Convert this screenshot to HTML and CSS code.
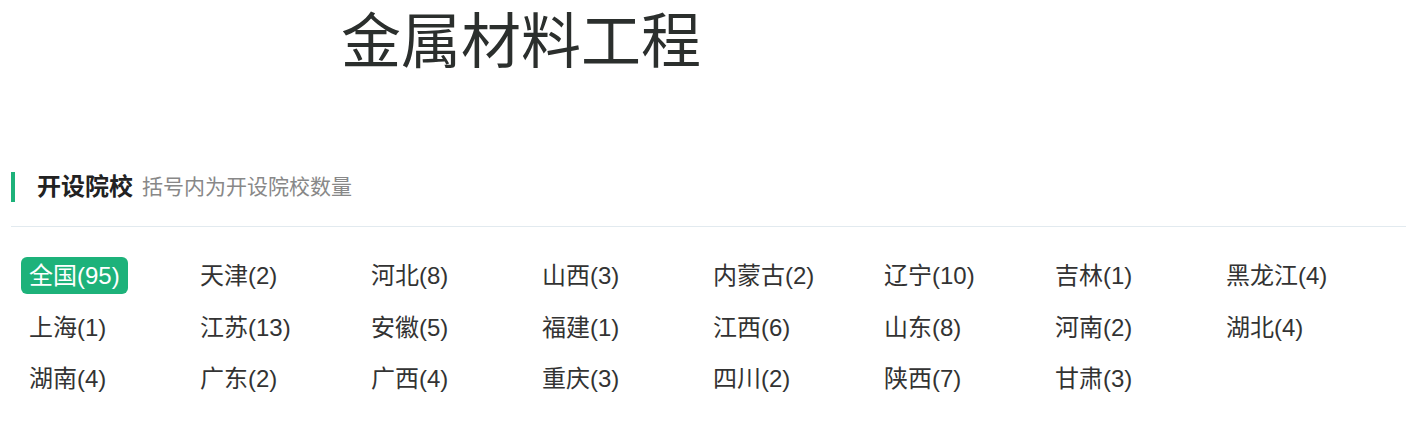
FILE: index.html
```html
<!DOCTYPE html>
<html lang="zh-CN">
	<head>
		<meta charset="utf-8">
		<meta name="viewport" content="width=device-width, initial-scale=1.0">
		<title>金属材料工程</title>
		<link rel="stylesheet" href="styles.css">
	</head>
	<body>
		<h1 class="major-title">金属材料工程</h1>

		<section class="schools">
			<div class="section-head">
				<h2 class="section-title">开设院校</h2>
				<span class="section-note">括号内为开设院校数量</span>
			</div>
			<ul class="region-list">
				<li><a class="region active">全国(95)</a></li>
				<li><a class="region">天津(2)</a></li>
				<li><a class="region">河北(8)</a></li>
				<li><a class="region">山西(3)</a></li>
				<li><a class="region">内蒙古(2)</a></li>
				<li><a class="region">辽宁(10)</a></li>
				<li><a class="region">吉林(1)</a></li>
				<li><a class="region">黑龙江(4)</a></li>
				<li><a class="region">上海(1)</a></li>
				<li><a class="region">江苏(13)</a></li>
				<li><a class="region">安徽(5)</a></li>
				<li><a class="region">福建(1)</a></li>
				<li><a class="region">江西(6)</a></li>
				<li><a class="region">山东(8)</a></li>
				<li><a class="region">河南(2)</a></li>
				<li><a class="region">湖北(4)</a></li>
				<li><a class="region">湖南(4)</a></li>
				<li><a class="region">广东(2)</a></li>
				<li><a class="region">广西(4)</a></li>
				<li><a class="region">重庆(3)</a></li>
				<li><a class="region">四川(2)</a></li>
				<li><a class="region">陕西(7)</a></li>
				<li><a class="region">甘肃(3)</a></li>
			</ul>
		</section>
	</body>
</html>
```

FILE: styles.css
```css
body {
	margin: 0;
	background: #fff;
	color: #333;
	font-family: 'Liberation Sans', 'Noto Sans CJK SC', sans-serif;
}

.major-title {
	margin: 0;
	padding: 13px 0 0 341px;
	font-size: 60px;
	font-weight: 400;
	line-height: 60px;
	color: #2b2f2d;
}

.schools {
	margin: 99px 8px 0 11px;
}

.section-head {
	display: flex;
	align-items: center;
	padding-bottom: 24px;
	border-bottom: 1px solid #e2eaef;
}

.section-title {
	margin: 0;
	padding-left: 22px;
	border-left: 4px solid #1db27a;
	height: 30px;
	font-size: 24px;
	font-weight: 700;
	line-height: 30px;
	color: #222;
}

.section-note {
	margin-left: 9px;
	font-size: 21px;
	line-height: 30px;
	color: #888;
}

.region-list {
	display: grid;
	grid-template-columns: repeat(8, 171px);
	grid-auto-rows: 37px;
	row-gap: 14.5px;
	margin: 30px 0 0;
	padding: 0 0 0 10px;
	list-style: none;
}

.region {
	display: inline-block;
	padding: 0 8px;
	border-radius: 6px;
	font-size: 24px;
	line-height: 37px;
	color: #333;
	cursor: pointer;
}

.region.active {
	background: #1db27a;
	color: #fff;
}
```
